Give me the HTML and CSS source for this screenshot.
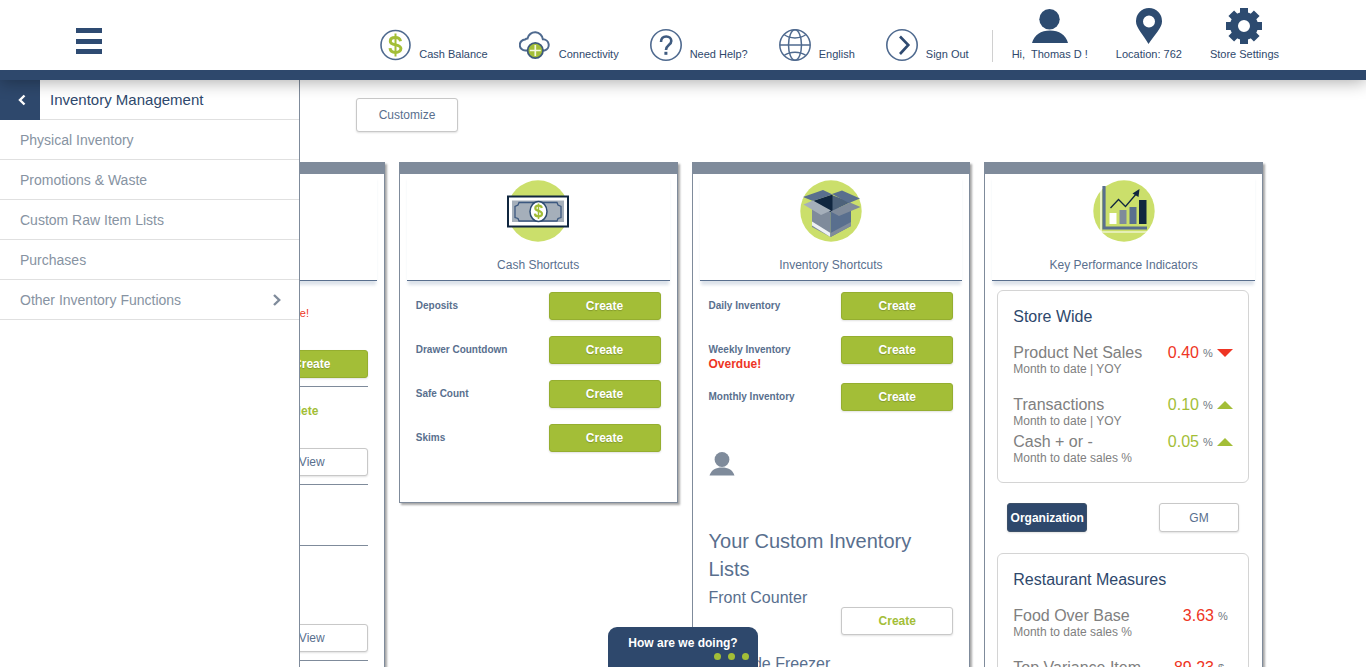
FILE: index.html
```html
<!DOCTYPE html>
<html lang="en">
<head>
<meta charset="utf-8">
<title>Dashboard</title>
<link rel="stylesheet" href="styles.css">
</head>
<body>
<header class="topbar">
  <button class="menu-toggle" type="button" aria-label="Menu"><span></span><span></span><span></span></button>
  <nav class="topnav">
    <a class="tool" href="#"><svg class="tool-icon" viewBox="0 0 32 32"><circle cx="16.5" cy="16" r="14.5" fill="none" stroke="#4f6a8f" stroke-width="1.6"/><path d="M21.5 12.2C21 9.600 19 8.600 16.300 8.600c-3 0-5 1.300-5 3.600 0 5 10.600 2.400 10.600 7.400 0 2.300-2.200 3.800-5.300 3.800-3.300 0-5.300-1.300-5.600-4.200" fill="none" stroke="#a3be37" stroke-width="3"/><path d="M16.500 4.500v23" stroke="#a3be37" stroke-width="2"/></svg>Cash Balance</a>
    <a class="tool" href="#"><svg class="tool-icon" viewBox="0 0 32 32"><path d="M8 21.500H6.500a5.500 5.500 0 0 1-.4-11 4 4 0 0 1 2.400-1 7.800 7.800 0 0 1 15.400 0.800 5.700 5.700 0 0 1 1.600 11.200H24" fill="none" stroke="#4f6a8f" stroke-width="2"/><circle cx="16.300" cy="21.500" r="7.700" fill="#a3be37" stroke="#3f5b7c" stroke-width="1.800"/><path d="M16.300 16v11M10.800 21.500h11" stroke="#f4f8df" stroke-width="1.700"/></svg>Connectivity</a>
    <a class="tool" href="#"><svg class="tool-icon" viewBox="0 0 32 32"><circle cx="16" cy="16" r="15.200" fill="none" stroke="#4f6a8f" stroke-width="1.600"/><path d="M11 13c0-3.500 2-5.500 5.200-5.500 3 0 5.100 1.800 5.100 4.500 0 4.200-5.300 4-5.300 9" fill="none" stroke="#3f5b80" stroke-width="2.600"/><rect x="14.400" y="22.800" width="3" height="3" fill="#3f5b80"/></svg>Need Help?</a>
    <a class="tool" href="#"><svg class="tool-icon" viewBox="0 0 32 32" fill="none" stroke="#4f6a8f" stroke-width="1.500"><circle cx="16" cy="16" r="15.200"/><ellipse cx="16" cy="16" rx="6.500" ry="15.200"/><path d="M1 16h30M5 5.500c6 4.500 16 4.500 22 0M5 26.500c6-4.500 16-4.500 22 0"/></svg>English</a>
    <a class="tool" href="#"><svg class="tool-icon" viewBox="0 0 32 32" fill="none"><circle cx="16" cy="16" r="15.200" stroke="#4f6a8f" stroke-width="1.600"/><path d="M14 7.500l8.300 8.500-8.300 9" stroke="#2f4a70" stroke-width="2.600"/></svg>Sign Out</a>
    <span class="divider"></span>
    <a class="profile" href="#"><svg width="36" height="36" viewBox="0 0 36 36" fill="#2d4b70"><circle cx="17.500" cy="11.200" r="10.200"/><path d="M0 35C2 27 9 22.500 18 22.500S34 27 36 35z"/></svg><span>Hi,&nbsp; Thomas D !</span></a>
    <a class="profile" href="#"><svg width="36" height="36" viewBox="0 0 36 36" fill="#2d4b70"><path fill-rule="evenodd" d="M18 0a13 13 0 0 1 13 13.500C31 20 24 26 17.500 36 12 26 5 20 5 13.500A13 13 0 0 1 18 0zm0 7.500a6 6 0 1 0 0 12 6 6 0 0 0 0-12z"/></svg><span>Location: 762</span></a>
    <a class="profile" href="#"><svg width="36" height="36" viewBox="0 0 36 36" fill="#2d4b70"><path d="M14 0h8v7h-8zM14 29h8v7h-8zM0 14h7v8H0zM29 14h7v8h-7z"/><path d="M14 0h8v7h-8zM14 29h8v7h-8zM0 14h7v8H0zM29 14h7v8h-7z" transform="rotate(45 18 18)"/><path fill-rule="evenodd" d="M18 4a14 14 0 1 1 0 28 14 14 0 0 1 0-28zm0 8a6 6 0 1 0 0 12 6 6 0 0 0 0-12z"/></svg><span>Store Settings</span></a>
  </nav>
</header>

<div class="workspace">
  <aside class="drawer">
    <div class="drawer-head">
      <button class="drawer-back" type="button" aria-label="Back"><svg width="8" height="12" viewBox="0 0 8 12"><path d="M6.500 1.500L2 6l4.500 4.500" fill="none" stroke="#fff" stroke-width="2.400"/></svg></button>
      <h2>Inventory Management</h2>
    </div>
    <a href="#">Physical Inventory</a>
    <a href="#">Promotions &amp; Waste</a>
    <a href="#">Custom Raw Item Lists</a>
    <a href="#">Purchases</a>
    <a href="#">Other Inventory Functions<svg width="8" height="12" viewBox="0 0 8 12"><path d="M1 1l5.200 5L1 11" fill="none" stroke="#7f8b9b" stroke-width="2.400"/></svg></a>
  </aside>

  <main class="dashboard">
    <div class="toolbar"><button class="btn btn-customize" type="button">Customize</button></div>
    <div class="cards">
      <section class="card">
        <div class="card-head"></div>
        <div class="task"><p class="note late">Overdue!</p><button class="btn btn-green" type="button">Create</button></div>
        <div class="task"><p class="note done">Complete</p><button class="btn" type="button">View</button></div>
        <div class="task task-empty"></div>
        <div class="task task-tall"><button class="btn" type="button">View</button></div>
      </section>

      <section class="card card-short">
        <div class="card-head">
          <svg width="64" height="62" viewBox="0 0 64 62"><circle cx="32" cy="31" r="30.700" fill="#cbdf6b"/><rect x="2" y="16.500" width="60" height="30" fill="#fff" stroke="#10263f" stroke-width="2"/><rect x="6" y="20.500" width="52" height="21.500" fill="#a5afba"/><path d="M13 22.500h38l1 2.500 3 1.500v11l-3 1-1 2.500H13l-1-2.500-3-1v-11l3-1.500z" fill="none" stroke="#3c587f" stroke-width="1.300"/><ellipse cx="32.500" cy="31.500" rx="8.500" ry="10" fill="#fff" stroke="#2d4b70" stroke-width="1.500"/><path d="M35.800 28c-.3-1.600-1.500-2.300-3.300-2.300-2 0-3.200.9-3.200 2.500 0 3.300 6.700 2 6.700 5.500 0 1.700-1.400 2.700-3.500 2.700s-3.500-.9-3.600-2.800" fill="none" stroke="#a3be37" stroke-width="2.200"/><path d="M32.500 23.500v15.500" stroke="#a3be37" stroke-width="1.500"/></svg>
          <h3>Cash Shortcuts</h3>
        </div>
        <div class="shortcuts">
          <div class="shortcut"><span>Deposits</span><button class="btn btn-green" type="button">Create</button></div>
          <div class="shortcut"><span>Drawer Countdown</span><button class="btn btn-green" type="button">Create</button></div>
          <div class="shortcut"><span>Safe Count</span><button class="btn btn-green" type="button">Create</button></div>
          <div class="shortcut"><span>Skims</span><button class="btn btn-green" type="button">Create</button></div>
        </div>
      </section>

      <section class="card">
        <div class="card-head">
          <svg width="64" height="62" viewBox="0 0 64 62"><circle cx="32" cy="31" r="30.700" fill="#cbdf6b"/><path d="M13 28v19l18.500 10V28z" fill="#7f8b9b"/><path d="M13 41.500v4L31.500 57v-4z" fill="#eef1f4"/><path d="M31.500 28v29L52 46V28z" fill="#596f8e"/><path d="M31.500 53v4L52 46v-4z" fill="#7f8b9b"/><path d="M14 21l18.500-6L52 22 31.500 32z" fill="#4d627a"/><path d="M14 21l19.500-6.500V31L31.500 32z" fill="#10263f"/><path d="M4 17l20-7 9.500 4.500L14 21z" fill="#596f8e"/><path d="M33 14l10-3.500L61 18.500 50 23z" fill="#596f8e"/><path d="M4.500 24.500L14 20.500 32 30.500 22 35z" fill="#a5afba"/><path d="M31.500 31.500L51 22.500l10.500 4.500L40 36z" fill="#7f8b9b"/></svg>
          <h3>Inventory Shortcuts</h3>
        </div>
        <div class="shortcuts">
          <div class="shortcut"><span>Daily Inventory</span><button class="btn btn-green" type="button">Create</button></div>
          <div class="shortcut"><span>Weekly Inventory<strong>Overdue!</strong></span><button class="btn btn-green" type="button">Create</button></div>
          <div class="shortcut"><span>Monthly Inventory</span><button class="btn btn-green" type="button">Create</button></div>
        </div>
        <div class="custom">
          <svg width="26" height="24" viewBox="0 0 26 24" fill="#7f8b9b"><circle cx="13" cy="7.500" r="7.400"/><path d="M0.500 23.500C2.500 17.500 7 15.500 13 15.500s10.500 2 12.500 8z"/></svg>
          <h4>Your Custom Inventory Lists</h4>
          <div class="list-row"><p>Front Counter</p><button class="btn btn-text-green" type="button">Create</button></div>
          <div class="list-row"><p>Out Side Freezer</p><button class="btn btn-text-green" type="button">Create</button></div>
        </div>
      </section>

      <section class="card">
        <div class="card-head">
          <svg width="64" height="62" viewBox="0 0 64 62"><circle cx="32" cy="31" r="30.700" fill="#cbdf6b"/><path d="M9 6v46h46" fill="none" stroke="#fff" stroke-width="1.200"/><path d="M12 6v42h43" fill="none" stroke="#596f8e" stroke-width="3.200"/><rect x="17.500" y="33" width="7" height="11" fill="#fff"/><rect x="27.500" y="30" width="7" height="14" fill="#7f8b9b"/><rect x="37.500" y="27" width="7" height="17" fill="#596f8e"/><rect x="47" y="20" width="7.500" height="24" fill="#10263f"/><path d="M18.500 28l8-8.500 7 7L45 13" fill="none" stroke="#10263f" stroke-width="1.300"/><path d="M40.500 13.500L47.500 9l-1 8z" fill="#10263f"/></svg>
          <h3>Key Performance Indicators</h3>
        </div>
        <div class="kpi-box">
          <h4>Store Wide</h4>
          <div class="kpi kpi-first"><div><p>Product Net Sales</p><small>Month to date | YOY</small></div><span class="value bad">0.40</span><span class="unit">%</span><i class="arrow-down"></i></div>
          <div class="kpi"><div><p>Transactions</p><small>Month to date | YOY</small></div><span class="value good">0.10</span><span class="unit">%</span><i class="arrow-up"></i></div>
          <div class="kpi"><div><p>Cash + or -</p><small>Month to date sales %</small></div><span class="value good">0.05</span><span class="unit">%</span><i class="arrow-up"></i></div>
        </div>
        <div class="scope"><button class="btn btn-navy" type="button">Organization</button><button class="btn" type="button">GM</button></div>
        <div class="kpi-box kpi-box-plain">
          <h4>Restaurant Measures</h4>
          <div class="kpi kpi-first"><div><p>Food Over Base</p><small>Month to date sales %</small></div><span class="value bad">3.63</span><span class="unit">%</span></div>
          <div class="kpi"><div><p>Top Variance Item</p><small>Month to date</small></div><span class="value bad">89.23</span><span class="unit">$</span></div>
        </div>
      </section>
    </div>
  </main>
</div>

<button class="feedback" type="button">How are we doing?<span class="dots"><i></i><i></i><i></i></span></button>
</body>
</html>
```
FILE: styles.css
```css
* { box-sizing: border-box; }
html, body { height: 100%; }
body {
  margin: 0;
  display: flex;
  flex-direction: column;
  overflow: hidden;
  background: #fff;
  color: #596f8e;
  font: 12px/14px "Liberation Sans", Arial, sans-serif;
}
h2, h3, h4, p { margin: 0; font-weight: normal; }
a { color: inherit; text-decoration: none; }
button { font: inherit; cursor: pointer; }
svg { display: block; flex: none; }

/* top bar */
.topbar {
  flex: none;
  z-index: 3;
  display: flex;
  justify-content: space-between;
  height: 80px;
  padding: 0 87px 0 76px;
  background: #fff;
  border-bottom: 10px solid #2e486c;
  box-shadow: 0 2px 16px rgba(0, 0, 0, .33);
}
.menu-toggle {
  display: flex;
  flex-direction: column;
  justify-content: space-between;
  width: 26px;
  height: 26px;
  margin-top: 28px;
  padding: 0;
  border: 0;
  background: none;
}
.menu-toggle span { height: 5px; background: #2e4b72; }
.topnav {
  display: flex;
  align-items: flex-start;
  color: #2e486c;
  font-size: 11px;
  white-space: nowrap;
}
.tool {
  display: flex;
  align-items: flex-end;
  gap: 8px;
  margin-right: 31px;
  padding-top: 29px;
}
.tool-icon { width: 32px; height: 32px; }
.divider {
  width: 1px;
  height: 32px;
  margin: 30px 19px 0 -8px;
  background: #d0d0d0;
}
.profile {
  display: flex;
  flex-direction: column;
  align-items: center;
  gap: 3px;
  padding-top: 8px;
}
.profile + .profile { margin-left: 28px; }

/* drawer over the dashboard */
.workspace { position: relative; flex: 1; min-height: 0; }
.drawer {
  position: absolute;
  z-index: 2;
  top: 0;
  bottom: 0;
  left: 0;
  width: 300px;
  background: #fff;
  border-right: 1px solid #7f8b9b;
  color: #8793a2;
  font-size: 14px;
}
.drawer-head { display: flex; align-items: stretch; height: 40px; }
.drawer-head h2 {
  flex: 1;
  padding-left: 10px;
  border-bottom: 1px solid #e0e0e0;
  color: #2e486c;
  font-size: 15px;
  line-height: 40px;
}
.drawer-back {
  display: grid;
  place-items: center;
  width: 40px;
  padding: 0 0 0 4px;
  border: 0;
  background: #2e486c;
}
.drawer > a {
  display: flex;
  align-items: center;
  justify-content: space-between;
  height: 40px;
  padding: 0 18px 0 20px;
  border-bottom: 1px solid #e0e0e0;
}

/* dashboard */
.dashboard { height: 100%; overflow: hidden; }
.toolbar, .cards { max-width: 1170px; margin: 0 auto; padding: 0 5px 0 8px; }
.toolbar { padding-top: 18px; padding-left: 258px; }
.cards {
  display: grid;
  grid-template-columns: repeat(4, 1fr);
  gap: 14px;
  align-items: start;
  padding-top: 30px;
}
.card {
  min-height: 560px;
  border: 1px solid #7f8b9b;
  border-top-width: 12px;
  box-shadow: 2px 2px 2px rgba(0, 0, 0, .35);
}
.card-short { min-height: 341px; }
.card-head {
  display: flex;
  flex-direction: column;
  align-items: center;
  gap: 16px;
  height: 107px;
  margin: 0 7px;
  padding-top: 6px;
  border-bottom: 1px solid #596f8e;
  box-shadow: 0 5px 3px -1px #dde3ea;
}
.card-head h3 { font-size: 12px; line-height: 14px; }

.btn {
  width: 112px;
  height: 28px;
  padding: 0;
  border: 1px solid #c8c8c8;
  border-radius: 3px;
  background: #fff;
  color: #596f8e;
  box-shadow: 0 1px 2px rgba(0, 0, 0, .12);
}
.btn-green {
  border-color: #95ae30;
  background: #a3be37;
  color: #fff;
  font-weight: bold;
  text-shadow: 0 1px 1px rgba(0, 0, 0, .2);
}
.btn-text-green { color: #a3be37; font-weight: bold; }
.btn-customize { width: 102px; height: 34px; }
.btn-navy { border-color: #3c5069; background: #2e486c; color: #fff; font-weight: bold; }

.task {
  display: flex;
  flex-direction: column;
  align-items: flex-end;
  justify-content: space-between;
  height: 98px;
  margin: 0 16px;
  padding: 17px 0 8px;
  border-bottom: 1px solid #7f8b9b;
}
.card-head + .task { height: 106px; padding-top: 25px; }
.task-empty { height: 61px; }
.task.task-tall { height: 115px; justify-content: flex-end; }
.note { width: 104px; font-weight: bold; }
.late { color: #ee3524; font-size: 11px; font-weight: normal; }
.done { color: #a3be37; }

.shortcuts { display: grid; gap: 16px; padding: 11px 16px 0; }
.shortcut { display: flex; justify-content: space-between; align-items: flex-start; }
.shortcut > span { padding-top: 7px; font-size: 10px; font-weight: bold; }
.shortcut strong { display: block; color: #ee3524; font-size: 12px; }
.shortcut:has(strong) { height: 31px; }

.custom { padding: 41px 16px 0; }
.custom h4 { padding: 51px 0 5px; font-size: 20px; line-height: 28px; }
.list-row { display: flex; justify-content: space-between; height: 66px; font-size: 16px; line-height: 20px; }
.list-row .btn { margin-top: 19px; font-size: 12px; line-height: 14px; }

.kpi-box {
  min-height: 193px;
  margin: 9px 13px 0 12px;
  padding: 16px 15px 0;
  border: 1px solid #d4d4d4;
  border-radius: 6px;
}
.kpi-box h4 { color: #2e486c; font-size: 16px; line-height: 20px; }
.kpi { display: flex; align-items: flex-start; height: 37px; color: #808080; line-height: 18px; }
.kpi > div { flex: 1; }
.kpi p { font-size: 16px; }
.kpi small { display: block; font-size: 12px; line-height: 14px; }
.kpi-first { height: 52px; margin-top: 17px; }
.value { font-size: 16px; }
.unit { width: 14px; margin-left: 4px; color: #6f7780; font-size: 11px; }
.kpi-box-plain .unit { margin-right: 1px; }
.bad { color: #ee3524; }
.good { color: #a3be37; }
.arrow-down, .arrow-up {
  width: 16px;
  height: 8px;
  margin-top: 5px;
  background: #ee3524;
  clip-path: polygon(0 0, 100% 0, 50% 100%);
}
.arrow-up { background: #a3be37; clip-path: polygon(50% 0, 100% 100%, 0 100%); }
.scope { display: flex; justify-content: space-between; margin: 20px 23px 0 22px; }
.scope .btn { width: 80px; height: 29px; }
.scope + .kpi-box { margin-top: 21px; }

/* feedback tab */
.feedback {
  position: fixed;
  z-index: 4;
  bottom: 0;
  left: 50%;
  width: 150px;
  height: 40px;
  margin-left: -75px;
  padding: 9px 0 0;
  border: 0;
  border-radius: 9px 9px 0 0;
  background: #2e486c;
  color: #fff;
  font-weight: bold;
}
.dots { display: flex; justify-content: flex-end; gap: 7px; padding: 3px 9px 7px 0; }
.dots i { width: 7px; height: 7px; border-radius: 50%; background: #a3be37; }
```
